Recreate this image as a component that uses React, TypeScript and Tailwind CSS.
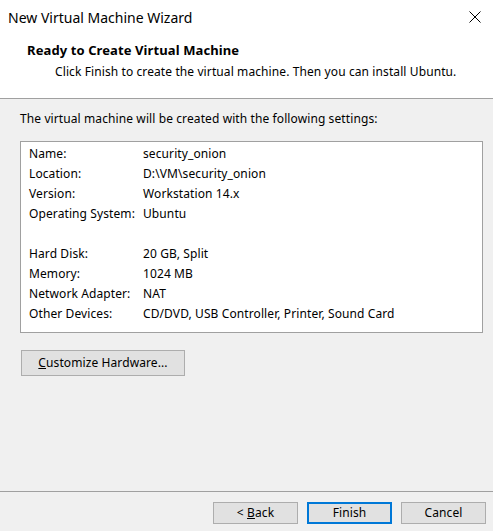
import React from 'react';

const settings: [string, string][] = [
  ['Name:', 'security_onion'],
  ['Location:', 'D:\\VM\\security_onion'],
  ['Version:', 'Workstation 14.x'],
  ['Operating System:', 'Ubuntu'],
  ['', ''],
  ['Hard Disk:', '20 GB, Split'],
  ['Memory:', '1024 MB'],
  ['Network Adapter:', 'NAT'],
  ['Other Devices:', 'CD/DVD, USB Controller, Printer, Sound Card'],
];

function WinButton({ children, primary }: { children: React.ReactNode; primary?: boolean }) {
  return (
    <button
      className={
        primary
          ? 'w-[85px] h-[22px] bg-[#e1e1e1] border-2 border-[#0078d7] text-[12px] text-black'
          : 'w-[85px] h-[22px] bg-[#e1e1e1] border border-[#adadad] text-[12px] text-black'
      }
    >
      {children}
    </button>
  );
}

export default function App() {
  return (
    <div
      className="w-[493px] h-[531px] flex flex-col bg-[#f0f0f0] text-black overflow-hidden tracking-[0.1px]"
      style={{ fontFamily: '"Noto Sans", "Liberation Sans", sans-serif' }}
    >
      <div className="bg-white border-b border-[#a0a0a0]">
        <div className="h-[34px] flex items-center justify-between pl-[8px] pr-[12px]">
          <span className="text-[14px] tracking-normal text-black">New Virtual Machine Wizard</span>
          <svg width="12" height="12" viewBox="0 0 12 12">
            <path d="M0.5 0.5 L11.5 11.5 M11.5 0.5 L0.5 11.5" stroke="#000" strokeWidth="1" />
          </svg>
        </div>
        <div className="h-[64px] pl-[27px] pt-[6px]">
          <div className="text-[13px] font-bold leading-[20px] tracking-[0.1px]">Ready to Create Virtual Machine</div>
          <div className="text-[12px] leading-[20px] pl-[28px] pt-[2px]">
            Click Finish to create the virtual machine. Then you can install Ubuntu.
          </div>
        </div>
      </div>

      <div className="flex-1 pl-[20px] pr-[10px] pt-[10px]">
        <div className="text-[12px] leading-[20px]">
          The virtual machine will be created with the following settings:
        </div>
        <div className="mt-[12px] h-[192px] bg-white border border-[#a0a0a0] pl-[8px] pt-[2px] text-[12px]">
          {settings.map(([label, value], i) => (
            <div key={i} className="flex h-[20px] items-center">
              <span className="w-[114px] shrink-0">{label}</span>
              <span>{value}</span>
            </div>
          ))}
        </div>
        <button className="mt-[17px] ml-[1px] w-[164px] h-[26px] bg-[#e1e1e1] border border-[#adadad] text-[12px]">
          <span className="underline">C</span>ustomize Hardware...
        </button>
      </div>

      <div className="h-[40px] border-t border-[#a0a0a0] flex justify-end items-start gap-[9px] pt-[10px] pr-[7px]">
        <WinButton>
          &lt; <span className="underline">B</span>ack
        </WinButton>
        <WinButton primary>Finish</WinButton>
        <WinButton>Cancel</WinButton>
      </div>
    </div>
  );
}
